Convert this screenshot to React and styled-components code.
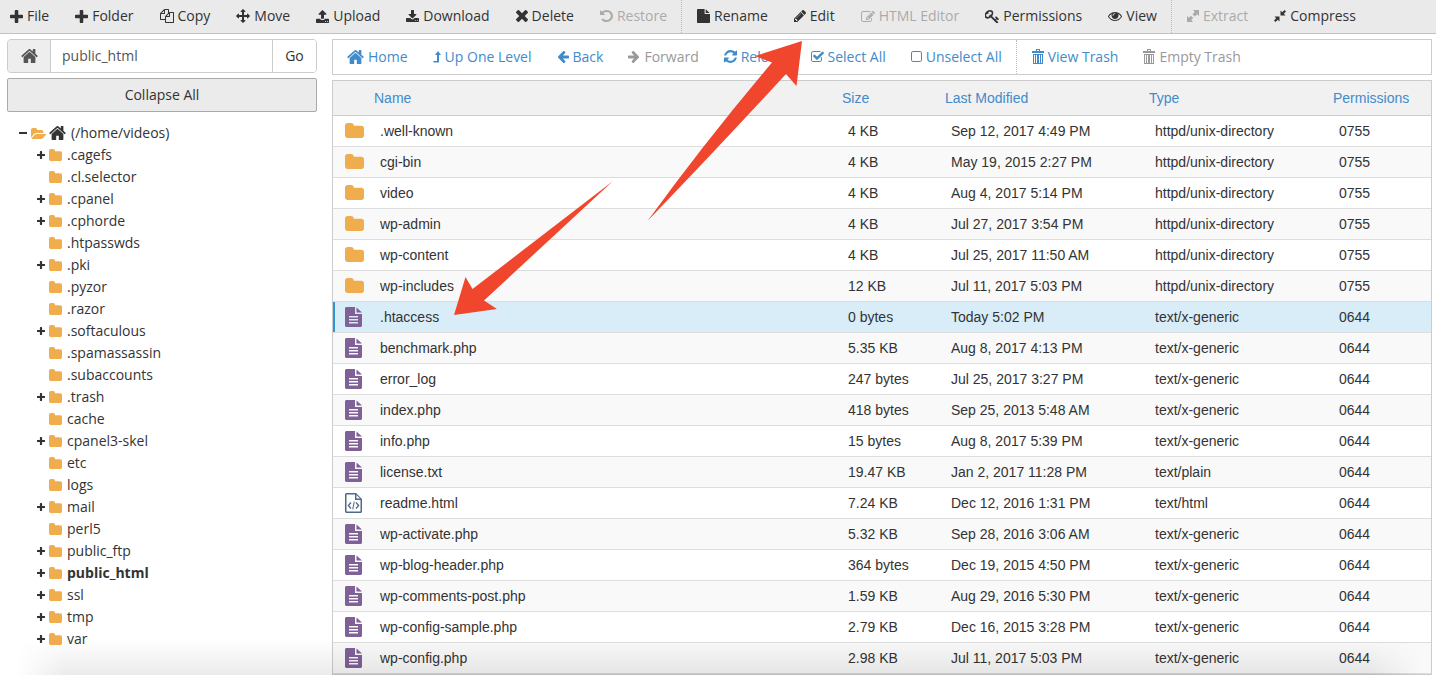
import React from 'react';
import styled, { createGlobalStyle } from 'styled-components';

const GlobalStyle = createGlobalStyle`
  * {
    box-sizing: border-box;
  }
  body {
    margin: 0;
    background: #fff;
    color: #333;
    font-family: 'Open Sans', sans-serif;
    font-size: 14px;
    line-height: 20px;
  }
  button, input {
    font: inherit;
    color: inherit;
  }
`;

const Page = styled.div`
  position: relative;
  height: 100vh;
  overflow: hidden;
`;
const Toolbar = styled.div`
  height: 34px;
  padding: 0 10px;
  border-bottom: 1px solid #c2c2c6;
  background: #eaeaeb;
  display: flex;
`;
const NavBar = styled.div`
  height: 36px;
  padding: 0 14px;
  border: 1px solid #ccc;
  display: flex;
`;
const Group = styled.div`
  display: flex;
  gap: ${props => (props.$wide ? '26px' : '25px')};
  padding-right: 14px;

  & + & {
    padding-left: ${props => (props.$wide ? '17px' : '15px')};
    border-left: 1px dotted #bbb;
  }
`;
const ToolButton = styled.button`
  padding: 0 0 1px;
  border: 0;
  background: none;
  display: flex;
  align-items: center;
  gap: 4px;
  white-space: nowrap;
  color: ${props => props.$color || '#333'};

  &:disabled {
    color: ${props => props.$muted || '#aaa'};
  }
`;
const Content = styled.div`
  display: flex;
  align-items: flex-start;
  gap: 15px;
  padding: 5px 4px 0 7px;
`;
const Sidebar = styled.div`
  flex: none;
  width: 310px;
`;
const PathForm = styled.form`
  height: 34px;
  border: 1px solid #ccc;
  border-radius: 4px;
  display: flex;
  overflow: hidden;
`;
const PathIcon = styled.label`
  flex: none;
  width: 43px;
  border-right: 1px solid #ccc;
  background: #eee;
  color: #555;
  display: flex;
  align-items: center;
  justify-content: center;
`;
const PathInput = styled.input`
  flex: 1;
  min-width: 0;
  padding: 0 11px;
  border: 0;
  outline: 0;
  color: #555;
`;
const GoButton = styled.button`
  flex: none;
  width: 44px;
  padding: 0;
  border: 0;
  border-left: 1px solid #ccc;
  background: #fff;
`;
const CollapseButton = styled.button`
  width: 100%;
  height: 34px;
  margin-top: 5px;
  border: 1px solid #aaa;
  border-radius: 2px;
  background: #ebebeb;
`;
const Tree = styled.ul`
  margin: 0;
  padding: 10px 0 0 12px;
  list-style: none;

  & & {
    padding: 0 0 0 18px;
  }
`;
const TreeRow = styled.div`
  height: 22px;
  display: flex;
  align-items: center;
  gap: 3px;
  font-weight: ${props => (props.$current ? 700 : 400)};
`;
const Toggle = styled.span`
  width: 9px;
  display: flex;
`;
const TreeLabel = styled.span`
  padding-left: 2px;
`;
const Main = styled.div`
  flex: 1;
  min-width: 0;
`;
const Panel = styled.div`
  margin-top: 5px;
  border: 1px solid #ccc;
`;
const Table = styled.table`
  width: 100%;
  table-layout: fixed;
  border-collapse: collapse;
  font-family: 'Liberation Sans', Arial, sans-serif;
`;
const HeadCell = styled.th`
  width: ${props => props.$width || 'auto'};
  height: 34px;
  padding: 0 7px;
  border-bottom: 1px solid #ccc;
  background: #f1f1f1;
  color: #428bca;
  font-weight: 400;
  text-align: left;
`;
const Row = styled.tr`
  background: ${props => (props.$selected ? '#d9edf9' : '#fff')};
  box-shadow: ${props => (props.$selected ? 'inset 2px 0 #2e96d2' : 'none')};

  &:nth-child(even) {
    background: #f9f9f9;
  }
`;
const Cell = styled.td`
  height: 31px;
  padding: 0 13px;
  border-bottom: 1px solid #ddd;
  white-space: nowrap;
`;
const IconCell = styled(Cell)`
  padding: 0 0 0 12px;
`;
const BottomShade = styled.div`
  position: absolute;
  left: 16px;
  right: 16px;
  bottom: 0;
  height: 36px;
  background: linear-gradient(transparent, rgba(0, 0, 0, 0.08));
  mask-image: linear-gradient(90deg, transparent, #000 50px, #000 calc(100% - 50px), transparent);
  pointer-events: none;
`;
const Arrows = styled.svg`
  position: absolute;
  left: 0;
  top: 0;
  pointer-events: none;
`;
const Svg = styled.svg`
  display: block;
  flex: none;
`;

// viewBox is cropped to the drawing, so w/h are the drawn size
const icons = {
  plus: { box: '192 128 1408 1408', w: 13, h: 13, d: 'M1600 736v192q0 40-28 68t-68 28h-416v416q0 40-28 68t-68 28h-192q-40 0-68-28t-28-68v-416h-416q-40 0-68-28t-28-68v-192q0-40 28-68t68-28h416v-416q0-40 28-68t68-28h192q40 0 68 28t28 68v416h416q40 0 68 28t28 68z' },
  minus: { box: '0 0 8 8', w: 8, h: 8, d: 'M0 3h8v2H0z' },
  copy: { box: '0 0 1792 1792', w: 14, h: 14, d: 'M1696 384q40 0 68 28t28 68v1216q0 40-28 68t-68 28h-960q-40 0-68-28t-28-68v-288h-544q-40 0-68-28t-28-68v-672q0-40 20-88t48-76l408-408q28-28 76-48t88-20h416q40 0 68 28t28 68v328q68-40 128-40h416zm-544 213l-299 299h299v-299zm-640-384l-299 299h299v-299zm196 647l316-316v-416h-384v416q0 40-28 68t-68 28h-416v640h512v-256q0-40 20-88t48-76zm956 804v-1152h-384v416q0 40-28 68t-68 28h-416v640h896z' },
  move: { box: '0 0 1792 1792', w: 14, h: 14, d: 'M1792 896q0 26-19 45l-256 256q-19 19-45 19t-45-19-19-45v-128h-384v384h128q26 0 45 19t19 45-19 45l-256 256q-19 19-45 19t-45-19l-256-256q-19-19-19-45t19-45 45-19h128v-384h-384v128q0 26-19 45t-45 19-45-19l-256-256q-19-19-19-45t19-45l256-256q19-19 45-19t45 19 19 45v128h384v-384h-128q-26 0-45-19t-19-45 19-45l256-256q19-19 45-19t45 19l256 256q19 19 19 45t-19 45-45 19h-128v384h384v-128q0-26 19-45t45-19 45 19l256 256q19 19 19 45z' },
  upload: { box: '64 64 1664 1600', w: 13, h: 13, d: 'M1344 1472q0-26-19-45t-45-19-45 19-19 45 19 45 45 19 45-19 19-45zm256 0q0-26-19-45t-45-19-45 19-19 45 19 45 45 19 45-19 19-45zm128-224v320q0 40-28 68t-68 28h-1472q-40 0-68-28t-28-68v-320q0-40 28-68t68-28h427q21 56 70.5 92t110.5 36h256q61 0 110.5-36t70.5-92h427q40 0 68 28t28 68zm-325-648q-17 40-59 40h-256v448q0 26-19 45t-45 19h-256q-26 0-45-19t-19-45v-448h-256q-42 0-59-40-17-39 14-69l448-448q18-19 45-19t45 19l448 448q31 30 14 69z' },
  download: { box: '64 0 1664 1536', w: 13, h: 12, d: 'M1344 1344q0-26-19-45t-45-19-45 19-19 45 19 45 45 19 45-19 19-45zm256 0q0-26-19-45t-45-19-45 19-19 45 19 45 45 19 45-19 19-45zm128-224v320q0 40-28 68t-68 28h-1472q-40 0-68-28t-28-68v-320q0-40 28-68t68-28h465l135 136q58 56 136 56t136-56l136-136h464q40 0 68 28t28 68zm-325-569q17 41-14 70l-448 448q-18 19-45 19t-45-19l-448-448q-31-29-14-70 17-39 59-39h256v-448q0-26 19-45t45-19h256q26 0 45 19t19 45v448h256q42 0 59 39z' },
  times: { box: '302 366 1188 1188', w: 12, h: 12, d: 'M1490 1322q0 40-28 68l-136 136q-28 28-68 28t-68-28l-294-294-294 294q-28 28-68 28t-68-28l-136-136q-28-28-28-68t28-68l294-294-294-294q-28-28-28-68t28-68l136-136q28-28 68-28t68 28l294 294 294-294q28-28 68-28t68 28l136 136q28 28 28 68t-28 68l-294 294 294 294q28 28 28 68z' },
  undo: { box: '128 128 1536 1536', w: 13, h: 12, d: 'M1664 896q0 156-61 298t-164 245-245 164-298 61q-172 0-327-72.5t-264-204.5q-7-10-6.5-22.5t8.5-20.5l137-138q10-9 25-9 16 2 23 12 73 95 179 147t225 52q104 0 198.5-40.5t163.5-109.5 109.5-163.5 40.5-198.5-40.5-198.5-109.5-163.5-163.5-109.5-198.5-40.5q-98 0-188 35.5t-160 101.5l137 138q31 30 14 69-17 40-59 40h-448q-26 0-45-19t-19-45v-448q0-42 40-59 39-17 69 14l130 129q107-101 244.5-156.5t284.5-55.5q156 0 298 61t245 164 164 245 61 298z' },
  file: { box: '128 0 1536 1792', w: 13, h: 14, d: 'M1152 512v-472q22 14 36 28l408 408q14 14 28 36h-472zm-128 32q0 40 28 68t68 28h544v1056q0 40-28 68t-68 28h-1344q-40 0-68-28t-28-68v-1600q0-40 28-68t68-28h800v544z' },
  pencil: { box: '128 149 1515 1515', w: 12, h: 12, d: 'M491 1536l91-91-235-235-91 91v107h128v128h107zm523-928q0-22-22-22-10 0-17 7l-542 542q-7 7-7 17 0 22 22 22 10 0 17-7l542-542q7-7 7-17zm-54-192l416 416-832 832h-416v-416zm683 96q0 53-37 90l-166 166-416-416 166-165q36-38 90-38 53 0 91 38l235 234q37 39 37 91z' },
  edit: { box: '0 128 1792 1408', w: 14, h: 11, d: 'M888 1184l116-116-152-152-116 116v56h96v96h56zm440-720q-16-16-33 1l-350 350q-17 17-1 33t33-1l350-350q17-17 1-33zm80 594v190q0 119-84.5 203.5t-203.5 84.5h-832q-119 0-203.5-84.5t-84.5-203.5v-832q0-119 84.5-203.5t203.5-84.5h832q63 0 117 25 15 7 18 23 3 17-9 29l-49 49q-14 14-32 8-23-6-45-6h-832q-66 0-113 47t-47 113v832q0 66 47 113t113 47h832q66 0 113-47t47-113v-126q0-13 9-22l64-64q15-15 35-7t20 29zm-96-738l288 288-672 672h-288v-288zm444 132l-92 92-288-288 92-92q28-28 68-28t68 28l152 152q28 28 28 68t-28 68z' },
  key: { box: '64 128 1620 1540', w: 14, h: 13, d: 'M832 512q0-80-56-136t-136-56-136 56-56 136q0 42 19 83-41-19-83-19-80 0-136 56t-56 136 56 136 136 56 136-56 56-136q0-42-19-83 41 19 83 19 80 0 136-56t56-136zm851 704q0 17-49 66t-66 49q-9 0-28.5-16t-36.5-33-38.5-40-24.5-26l-96 96 220 220q28 28 28 68 0 42-39 81t-81 39q-40 0-68-28l-671-671q-176 131-365 131-163 0-265.5-102.5t-102.5-265.5q0-160 95-313t248-248 313-95q163 0 265.5 102.5t102.5 265.5q0 189-131 365l355 355 96-96q-3-3-26-24.5t-40-38.5-33-36.5-16-28.5q0-17 49-66t66-49q13 0 23 10 6 6 46 44.5t82 79.5 86.5 86 73 78 28.5 41z' },
  eye: { box: '0 384 1792 1152', w: 14, h: 9, d: 'M1664 960q-152-236-381-353 61 104 61 225 0 185-131.5 316.5t-316.5 131.5-316.5-131.5-131.5-316.5q0-121 61-225-229 117-381 353 133 205 333.5 326.5t434.5 121.5 434.5-121.5 333.5-326.5zm-720-384q0-20-14-34t-34-14q-125 0-214.5 89.5t-89.5 214.5q0 20 14 34t34 14 34-14 14-34q0-86 61-147t147-61q20 0 34-14t14-34zm848 384q0 34-20 69-140 230-376.5 368.5t-499.5 138.5-499.5-139-376.5-368q-20-35-20-69t20-69q140-229 376.5-368t499.5-139 499.5 139 376.5 368q20 35 20 69z' },
  expand: { box: '0 0 12 12', w: 12, h: 12, d: 'M6 0H12V6L10 4.2 7.8 6.4 5.6 4.2 7.8 2zM6 12H0V6L2 7.8 4 5.8 6.2 8 4.2 10z' },
  compress: { box: '0 0 12 12', w: 12, h: 12, d: 'M6.5 .5v5H11.5L9.8 3.800 12 1.5 10.5 0 8.2 2.2zM5.5 11.5V6.5H.5L2.200 8.200 0 10.5 1.5 12 3.800 9.800z' },
  home: { box: '64 253 1664 1283', w: 17, h: 14, d: 'M1472 992v480q0 26-19 45t-45 19h-384v-384h-256v384h-384q-26 0-45-19t-19-45v-480q0-1 .5-3t.5-3l575-474 575 474q1 2 1 6zm223-69l-62 74q-8 9-21 11h-3q-13 0-21-7l-692-577-692 577q-12 8-24 7-13-2-21-11l-62-74q-8-10-7-23.5t11-21.5l719-599q32-26 76-26t76 26l244 204v-195q0-14 9-23t23-9h192q14 0 23 9t9 23v408l219 182q10 8 11 21.5t-7 23.5z' },
  levelUp: { box: '0 0 8 12', w: 8, h: 12, d: 'M5 0L8 4H6V11.5H1L0 10H4V4H2z' },
  back: { box: '64 190 1600 1540', w: 12, h: 12, d: 'M1664 896v128q0 53-32.5 90.5t-84.5 37.5h-704l293 294q38 36 38 90t-38 90l-75 76q-37 37-90 37-52 0-91-37l-651-652q-37-37-37-90 0-52 37-91l651-650q38-38 91-38 52 0 90 38l75 74q38 38 38 91t-38 91l-293 293h704q52 0 84.5 37.5t32.5 90.5z' },
  refresh: { box: '128 128 1536 1536', w: 13, h: 13, d: 'M1639 1056q0 5-1 7-64 268-268 434.5t-478 166.5q-146 0-282.5-55t-243.5-157l-129 129q-19 19-45 19t-45-19-19-45v-448q0-26 19-45t45-19h448q26 0 45 19t19 45-19 45l-137 137q71 66 161 102t187 36q134 0 250-65t186-179q11-17 53-117 8-23 30-23h192q13 0 22.5 9.5t9.5 22.5zm25-800v448q0 26-19 45t-45 19h-448q-26 0-45-19t-19-45 19-45l138-138q-148-137-349-137-134 0-250 65t-186 179q-11 17-53 117-8 23-30 23h-199q-13 0-22.5-9.5t-9.5-22.5v-7q65-268 270-434.5t480-166.5q146 0 284 55.5t245 156.5l130-129q19-19 45-19t45 19 19 45z' },
  checked: { box: '64 128 1664 1408', w: 13, h: 11, d: 'M1472 930v318q0 119-84.5 203.5t-203.5 84.5h-832q-119 0-203.5-84.5t-84.5-203.5v-832q0-119 84.5-203.5t203.5-84.5h832q63 0 117 25 15 7 18 23 3 17-9 29l-49 49q-10 10-23 10-3 0-9-2-23-6-45-6h-832q-66 0-113 47t-47 113v832q0 66 47 113t113 47h832q66 0 113-47t47-113v-254q0-13 9-22l64-64q10-10 23-10 6 0 12 3 20 8 20 29zm231-489l-814 814q-24 24-57 24t-57-24l-430-430q-24-24-24-57t24-57l110-110q24-24 57-24t57 24l263 263 647-647q24-24 57-24t57 24l110 110q24 24 24 57t-24 57z' },
  unchecked: { box: '192 128 1408 1408', w: 11, h: 11, d: 'M1312 256h-832q-66 0-113 47t-47 113v832q0 66 47 113t113 47h832q66 0 113-47t47-113v-832q0-66-47-113t-113-47zm288 160v832q0 119-84.5 203.5t-203.5 84.5h-832q-119 0-203.5-84.5t-84.5-203.5v-832q0-119 84.5-203.5t203.5-84.5h832q119 0 203.5 84.5t84.5 203.5z' },
  trash: { box: '0 0 12 15', w: 12, h: 15, d: 'M0 2H4V0H8V2H12V4H0zM5 1V2H7V1zM1 5H11V15H1zM2 6V14H3V6zM4 6V14H5V6zM7 6V14H8V6zM9 6V14H10V6z' },
  folder: { box: '64 128 1664 1408', w: 13, h: 12, d: 'M1728 608v704q0 92-66 158t-158 66h-1216q-92 0-158-66t-66-158v-960q0-92 66-158t158-66h320q92 0 158 66t66 158v32h672q92 0 158 66t66 158z' },
  folderOpen: { box: '64 128 1880 1408', w: 15, h: 11, d: 'M1943 952q0 31-31 66l-336 396q-43 51-120.5 86.5t-143.5 35.5h-1088q-34 0-60.5-13t-26.5-43q0-31 31-66l336-396q43-51 120.5-86.5t143.5-35.5h1088q34 0 60.5 13t26.5 43zm-343-344v160h-832q-94 0-197 47.5t-164 119.5l-337 396-5 6q0-4-.5-12.5t-.5-12.5v-960q0-92 66-158t158-66h320q92 0 158 66t66 158v32h544q92 0 158 66t66 158z' },
  text: { box: '0 0 17 20', w: 17, h: 20, d: 'M1 0H10V7H17V19L16 20H1L0 19V1zM11.5 .5L17 5.5H11.5zM4 9V10.5H13V9zM4 12V13.5H13V12zM4 15V16.5H13V15z' },
  code: { box: '0 0 17 20', w: 17, h: 20, d: 'M1 0H11L17 6V19L16 20H1L0 19V1zM1.5 1.5V18.5H15.5V7H10V1.5zM11.5 2V5.5H15zM5.5 9L6.5 10 4.3 12.5 6.5 15 5.5 16 2.5 12.5zM11.5 9L10.5 10 12.7 12.5 10.5 15 11.5 16 14.5 12.5zM8.8 8.5L9.8 8.8 8.2 16.5 7.2 16.2z' },
};

const Icon = ({ name, width, height, color = 'currentColor', flip }) => {
  const icon = icons[name];
  return (
    <Svg
      viewBox={icon.box}
      width={width || icon.w}
      height={height || icon.h}
      fill={color}
      fillRule="evenodd"
      preserveAspectRatio="none"
      transform={flip ? 'scale(-1 1)' : undefined}
      aria-hidden="true"
    >
      <path d={icon.d} />
    </Svg>
  );
};

// [icon, label, disabled]
const toolGroups = [
  [
    ['plus', 'File'],
    ['plus', 'Folder'],
    ['copy', 'Copy'],
    ['move', 'Move'],
    ['upload', 'Upload'],
    ['download', 'Download'],
    ['times', 'Delete'],
    ['undo', 'Restore', true],
  ],
  [
    ['file', 'Rename'],
    ['pencil', 'Edit'],
    ['edit', 'HTML Editor', true],
    ['key', 'Permissions'],
    ['eye', 'View'],
  ],
  [
    ['expand', 'Extract', true],
    ['compress', 'Compress'],
  ],
];

// [icon, label, disabled, flip]
const navGroups = [
  [
    ['home', 'Home'],
    ['levelUp', 'Up One Level'],
    ['back', 'Back'],
    ['back', 'Forward', true, true],
    ['refresh', 'Reload'],
    ['checked', 'Select All'],
    ['unchecked', 'Unselect All'],
  ],
  [
    ['trash', 'View Trash'],
    ['trash', 'Empty Trash', true],
  ],
];

// [name, can be expanded]
const folders = [
  ['.cagefs', true],
  ['.cl.selector', false],
  ['.cpanel', true],
  ['.cphorde', true],
  ['.htpasswds', false],
  ['.pki', true],
  ['.pyzor', false],
  ['.razor', false],
  ['.softaculous', true],
  ['.spamassassin', false],
  ['.subaccounts', false],
  ['.trash', true],
  ['cache', false],
  ['cpanel3-skel', true],
  ['etc', false],
  ['logs', false],
  ['mail', true],
  ['perl5', false],
  ['public_ftp', true],
  ['public_html', true],
  ['ssl', true],
  ['tmp', true],
  ['var', true],
];

const DIR = 'httpd/unix-directory';
const TEXT = 'text/x-generic';

const files = [
  ['.well-known', '4 KB', 'Sep 12, 2017 4:49 PM', DIR, '0755'],
  ['cgi-bin', '4 KB', 'May 19, 2015 2:27 PM', DIR, '0755'],
  ['video', '4 KB', 'Aug 4, 2017 5:14 PM', DIR, '0755'],
  ['wp-admin', '4 KB', 'Jul 27, 2017 3:54 PM', DIR, '0755'],
  ['wp-content', '4 KB', 'Jul 25, 2017 11:50 AM', DIR, '0755'],
  ['wp-includes', '12 KB', 'Jul 11, 2017 5:03 PM', DIR, '0755'],
  ['.htaccess', '0 bytes', 'Today 5:02 PM', TEXT, '0644'],
  ['benchmark.php', '5.35 KB', 'Aug 8, 2017 4:13 PM', TEXT, '0644'],
  ['error_log', '247 bytes', 'Jul 25, 2017 3:27 PM', TEXT, '0644'],
  ['index.php', '418 bytes', 'Sep 25, 2013 5:48 AM', TEXT, '0644'],
  ['info.php', '15 bytes', 'Aug 8, 2017 5:39 PM', TEXT, '0644'],
  ['license.txt', '19.47 KB', 'Jan 2, 2017 11:28 PM', 'text/plain', '0644'],
  ['readme.html', '7.24 KB', 'Dec 12, 2016 1:31 PM', 'text/html', '0644'],
  ['wp-activate.php', '5.32 KB', 'Sep 28, 2016 3:06 AM', TEXT, '0644'],
  ['wp-blog-header.php', '364 bytes', 'Dec 19, 2015 4:50 PM', TEXT, '0644'],
  ['wp-comments-post.php', '1.59 KB', 'Aug 29, 2016 5:30 PM', TEXT, '0644'],
  ['wp-config-sample.php', '2.79 KB', 'Dec 16, 2015 3:28 PM', TEXT, '0644'],
  ['wp-config.php', '2.98 KB', 'Jul 11, 2017 5:03 PM', TEXT, '0644'],
];

const FileIcon = ({ type }) => {
  if (type === DIR) {
    return <Icon name="folder" width={19} height={15} color="#f0ad4e" />;
  }
  if (type === 'text/html') {
    return <Icon name="code" color="#52698c" />;
  }
  return <Icon name="text" color="#7f6198" />;
};

const App = () => (
  <>
    <GlobalStyle />
    <Page>
      <Toolbar>
        {toolGroups.map((group, i) => (
          <Group key={i} $wide>
            {group.map(([icon, label, disabled]) => (
              <ToolButton key={label} type="button" disabled={disabled}>
                <Icon name={icon} />
                {label}
              </ToolButton>
            ))}
          </Group>
        ))}
      </Toolbar>
      <Content>
        <Sidebar>
          <PathForm onSubmit={e => e.preventDefault()}>
            <PathIcon htmlFor="path" aria-label="Path">
              <Icon name="home" />
            </PathIcon>
            <PathInput id="path" type="text" defaultValue="public_html" />
            <GoButton type="submit">Go</GoButton>
          </PathForm>
          <CollapseButton type="button">Collapse All</CollapseButton>
          <Tree>
            <li>
              <TreeRow>
                <Toggle><Icon name="minus" /></Toggle>
                <Icon name="folderOpen" color="#f0ad4e" />
                <Icon name="home" />
                <TreeLabel>(/home/videos)</TreeLabel>
              </TreeRow>
              <Tree>
                {folders.map(([name, expandable]) => (
                  <li key={name}>
                    <TreeRow $current={name === 'public_html'}>
                      <Toggle>{expandable && <Icon name="plus" width={8} height={8} />}</Toggle>
                      <Icon name="folder" color="#f0ad4e" />
                      <TreeLabel>{name}</TreeLabel>
                    </TreeRow>
                  </li>
                ))}
              </Tree>
            </li>
          </Tree>
        </Sidebar>
        <Main>
          <NavBar>
            {navGroups.map((group, i) => (
              <Group key={i}>
                {group.map(([icon, label, disabled, flip]) => (
                  <ToolButton key={label} type="button" disabled={disabled} $color="#428bca" $muted="#999">
                    <Icon name={icon} flip={flip} />
                    {label}
                  </ToolButton>
                ))}
              </Group>
            ))}
          </NavBar>
          <Panel>
            <Table>
              <thead>
                <tr>
                  <HeadCell $width="34px" aria-label="Kind" />
                  <HeadCell>Name</HeadCell>
                  <HeadCell $width="103px">Size</HeadCell>
                  <HeadCell $width="204px">Last Modified</HeadCell>
                  <HeadCell $width="184px">Type</HeadCell>
                  <HeadCell $width="105px">Permissions</HeadCell>
                </tr>
              </thead>
              <tbody>
                {files.map(([name, size, modified, type, mode]) => (
                  <Row key={name} $selected={name === '.htaccess'}>
                    <IconCell><FileIcon type={type} /></IconCell>
                    <Cell>{name}</Cell>
                    <Cell>{size}</Cell>
                    <Cell>{modified}</Cell>
                    <Cell>{type}</Cell>
                    <Cell>{mode}</Cell>
                  </Row>
                ))}
              </tbody>
            </Table>
          </Panel>
        </Main>
      </Content>
      <BottomShade />
      <Arrows width="820" height="330" viewBox="0 0 820 330" fill="#f0462d" aria-hidden="true">
        <path d="M802 41L755 56 772 62.5Q704 143 647.5 221 716 150 786 74L796.5 86z" />
        <path d="M454 315L465.5 277 472.5 289 613 181 484 300.5 497 309z" />
      </Arrows>
    </Page>
  </>
);

export default App;
